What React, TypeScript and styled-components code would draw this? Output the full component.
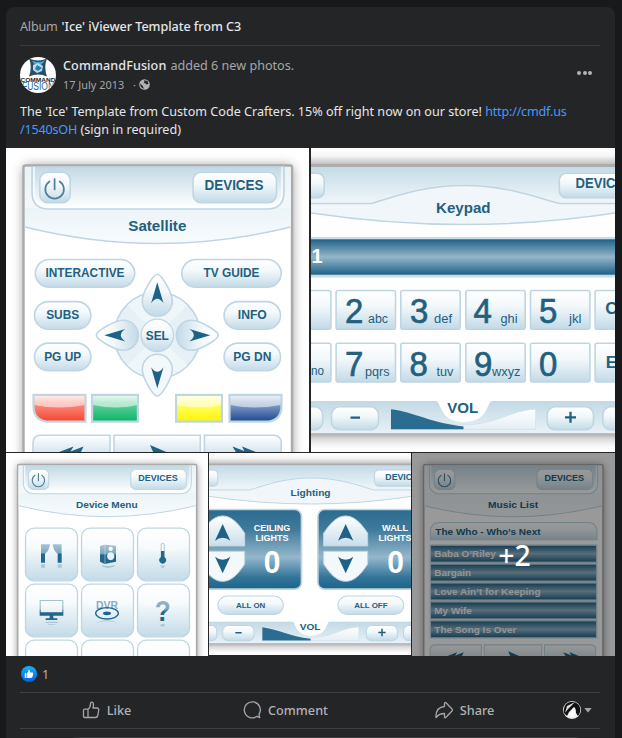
import React from "react";
import styled, { createGlobalStyle } from "styled-components";

const GlobalStyle = createGlobalStyle`
  *, *::before, *::after { box-sizing: border-box; }
  body {
    margin: 0;
    height: 738px;
    overflow: hidden;
    background: #18191a;
    color: #e4e6eb;
    font-family: "Noto Sans", "Open Sans", sans-serif;
    font-size: 12.6px;
  }
`;

const Page = styled.main`
  width: 622px;
  height: 738px;
  padding: 7px 7px 0 6px;
  overflow: hidden;
`;

const Card = styled.article`
  height: 760px;
  background: #242526;
  border-radius: 8px;
  overflow: hidden;
`;

const AlbumBar = styled.header`
  display: flex;
  gap: 4px;
  align-items: center;
  margin: 0 15px 0 14px;
  height: 39px;
  border-bottom: 1px solid #3a3b3c;
`;

const Muted = styled.span<{ $spacing?: number }>`
  color: #a4a7ab;
  letter-spacing: ${(p) => p.$spacing ?? 0}px;
`;

const Strong = styled.span<{ $spacing?: number }>`
  font-weight: 500;
  color: #e4e6eb;
  letter-spacing: ${(p) => p.$spacing ?? 0}px;
  white-space: nowrap;
`;

const PostHeader = styled.div`
  display: flex;
  align-items: center;
  height: 51px;
  margin-top: 3px;
  padding: 0 22px 0 14px;
`;

const Avatar = styled.svg`
  width: 36px;
  height: 36px;
  flex: none;
`;

const Byline = styled.div`
  flex: 1;
  margin-left: 7px;
  padding-top: 2px;
  display: flex;
  flex-direction: column;
`;

const AuthorLine = styled.div`
  display: flex;
  gap: 4px;
  line-height: 19px;
`;

const MetaLine = styled.div`
  display: flex;
  align-items: center;
  height: 20px;
  padding-bottom: 1px;
  font-size: 10.9px;
  color: #a4a7ab;
`;

const Dot = styled.span`
  margin: 0 3px 0 9px;
`;

const MoreButton = styled.button`
  display: flex;
  gap: 1.5px;
  padding: 0;
  border: 0;
  background: none;
  margin: 0 1px 4px 0;
  i {
    width: 4px;
    height: 4px;
    border-radius: 50%;
    background: #b0b3b8;
  }
`;

const Message = styled.p`
  margin: 0;
  height: 48px;
  padding: 3px 14px 0;
  line-height: 18px;
`;

const Link = styled.a`
  color: #4599ff;
  text-decoration: none;
  letter-spacing: -0.2px;
`;

const Gallery = styled.section`
  display: flex;
  flex-direction: column;
  gap: 1px;
`;

const PhotoRow = styled.div<{ $columns: string; $gap: number }>`
  display: grid;
  grid-template-columns: ${(p) => p.$columns};
  gap: ${(p) => p.$gap}px;
`;

const PhotoTile = styled.figure<{ $height: number }>`
  position: relative;
  margin: 0;
  height: ${(p) => p.$height}px;
  overflow: hidden;
  background: #fff;
  font-family: "Liberation Sans", Arial, sans-serif;
`;

const Artwork = styled.svg`
  display: block;
  width: 100%;
  height: 100%;
`;

const MoreOverlay = styled.div`
  position: absolute;
  inset: 0;
  display: flex;
  align-items: center;
  justify-content: center;
  padding-top: 1px;
  padding-left: 2px;
  background: rgba(0, 0, 0, 0.4);
  color: #fff;
  font: 500 28.5px "Noto Sans", sans-serif;
`;

const Reactions = styled.div`
  display: flex;
  align-items: center;
  gap: 5px;
  height: 37px;
  margin: 0 15px 0 14px;
  padding-left: 1px;
  border-bottom: 1px solid #3e4042;
  color: #b0b3b8;
`;

const Actions = styled.div`
  display: flex;
  align-items: center;
  height: 36px;
  margin: 0 15px 0 14px;
  padding-bottom: 1px;
  border-bottom: 1px solid #3e4042;
`;

const Action = styled.button`
  width: 179px;
  display: flex;
  align-items: center;
  justify-content: center;
  gap: 7px;
  padding: 0 6px 0 0;
  border: 0;
  background: none;
  color: #b0b3b8;
  font: 500 12.7px "Noto Sans", sans-serif;
`;

const Icon = styled.svg<{ $size: number }>`
  width: ${(p) => p.$size}px;
  height: ${(p) => p.$size}px;
  flex: none;
`;

const Identity = styled.div`
  display: flex;
  align-items: center;
  gap: 3px;
  margin-left: 6px;
`;

const CommentField = styled.div`
  height: 30px;
  margin: 8px 25px 0 57px;
  border-radius: 15px;
  background: #3a3b3c;
`;

const Defs = styled.svg`
  display: block;
  width: 0;
  height: 0;
`;

const INK = "#22607f";
const EDGE = "#bfd6e2";

type Stop = [number, string];
const gradients: Record<string, Stop[]> = {
  bar: [[0, "#c3d9e5"], [0.9, "#fafdfe"]],
  wide: [[0, "#c5dbe7"], [1, "#f1f7fa"]],
  hood: [[0, "#d9e8f0"], [0.4, "#e8f2f7"], [1, "#f7fbfd"]],
  key: [[0, "#ffffff"], [0.4, "#f3f8fb"], [1, "#c2dae7"]],
  disk: [[0, "#ffffff"], [1, "#c9deea"]],
  dark: [[0, "#1f6287"], [0.5, "#93b6ca"], [1, "#1f6287"]],
  panel: [[0, "#2b6b8f"], [0.25, "#3f7a9b"], [0.6, "#94b7cb"], [0.85, "#34759a"], [1, "#1d648a"]],
  foot: [[0, "#c2d9e5"], [1, "#e9f2f7"]],
  above: [[0, "#ffffff"], [0.45, "#f6f6f6"], [1, "#bcbcbc"]],
  below: [[0, "#aaaaaa"], [0.3, "#dcdcdc"], [0.7, "#fafafa"], [1, "#ffffff"]],
  red: [[0, "#ffd8d2"], [0.3, "#fb9083"], [1, "#f5442f"]],
  green: [[0, "#d4f5e4"], [0.3, "#67d1a0"], [1, "#08b566"]],
  yellow: [[0, "#ffffc8"], [0.3, "#ffff70"], [1, "#fff500"]],
  blue: [[0, "#dbe5f2"], [0.3, "#8ba4cb"], [1, "#1d478f"]],
  fade: [[0, "#a7c4d5"], [0.45, "#7fa9c0"], [0.55, "#22668b"], [1, "#22668b"]],
  shine: [[0, "#ffffff"], [1, "#e4eff5"]],
  like: [[0, "#18afff"], [1, "#0062df"]],
};

const Gradients = () => (
  <Defs aria-hidden="true">
    <defs>
      {Object.entries(gradients).map(([id, stops]) => (
        <linearGradient key={id} id={id} x1="0" y1="0" x2="0" y2="1">
          {stops.map(([offset, color]) => (
            <stop key={offset} offset={offset} stopColor={color} />
          ))}
        </linearGradient>
      ))}
      <filter id="soft" x="-20%" y="-20%" width="140%" height="140%">
        <feGaussianBlur stdDeviation="6" />
      </filter>
    </defs>
  </Defs>
);

interface LabelProps {
  x: number;
  y: number;
  w?: number;
  size?: number;
  color?: string;
  weight?: number;
  anchor?: "start" | "middle";
  children: string;
}

const Label = ({ x, y, w, size = 12.5, color = INK, weight = 700, anchor = "middle", children }: LabelProps) => (
  <text x={x} y={y} textLength={w} lengthAdjust="spacingAndGlyphs" fontSize={size} fill={color} fontWeight={weight} textAnchor={anchor}>
    {children}
  </text>
);

interface BoxProps {
  x: number;
  y: number;
  w: number;
  h: number;
  r: number;
  fill?: string;
  sw?: number;
}

const Box = ({ x, y, w, h, r, fill = "url(#key)", sw = 1.6 }: BoxProps) => (
  <rect x={x + 0.8} y={y + 0.8} width={w - 1.6} height={h - 1.6} rx={r} fill={fill} stroke={EDGE} strokeWidth={sw} />
);

const Pill = (p: { x: number; y: number; w: number; text: string; tw: number; size?: number }) => (
  <>
    <Box x={p.x} y={p.y} w={p.w} h={29.3} r={14} />
    <Label x={p.x + p.w / 2} y={p.y + 18.6} w={p.tw} size={p.size}>{p.text}</Label>
  </>
);

/* Frame, toolbar and title shared by the portrait remote screens. */
const PortraitShell = ({ title, width }: { title: string; width: number }) => (
  <>
    <rect x={18} y={18} width={268} height={310} rx={4} fill="#777" filter="url(#soft)" opacity={0.85} />
    <rect x={17.5} y={17.5} width={268.5} height={320} rx={2} fill="#fff" stroke="#aaa" strokeWidth={2.4} />
    <path d="M19 19H284.700V79Q151.500 112 19 79Z" fill="url(#hood)" />
    <path d="M19 79Q151.500 112 284.700 79" fill="none" stroke={EDGE} strokeWidth={1.5} />
    <path d="M19 19H26V44Q26 61 43 61H261Q278 61 278 44V19H284.700V60H19Z" fill="#f6fafc" opacity={0.6} />
    <path d="M26 19V44Q26 61 43 61H261Q278 61 278 44V19Z" fill="url(#bar)" stroke={EDGE} strokeWidth={1.6} />
    <path d="M28 19V44Q28 59 43 59H261Q276 59 276 44V19" fill="none" stroke="#fff" strokeWidth={1.6} opacity={0.8} />
    <Box x={33} y={23.500} w={32} h={32} r={8} />
    <path d="M43.500 33.500a9.300 9.300 0 1 0 10.200 0M48.600 31v10.500" fill="none" stroke="#4d7f9b" strokeWidth={1.7} strokeLinecap="round" />
    <Box x={186.300} y={23.500} w={85} h={32} r={8} />
    <Label x={228} y={42} w={59} size={13.800}>DEVICES</Label>
    <Label x={151.300} y={82.500} w={width} size={14.500}>{title}</Label>
  </>
);

const Transport = () => (
  <>
    <path d="M27 310V295Q27 287.300 35 287.300H104V310Z" fill="url(#disk)" stroke={EDGE} strokeWidth={1.600} />
    <path d="M108 310V287.300H194.300V310Z" fill="url(#disk)" stroke={EDGE} strokeWidth={1.600} />
    <path d="M198.400 310V287.300H267.500Q275.200 287.300 275.200 295V310Z" fill="url(#disk)" stroke={EDGE} strokeWidth={1.600} />
    <path d="M67.500 298.500L63 306H48ZM77.500 298.500L74 306H58Z" fill="#1f6287" />
    <path d="M144 297L165 306H148Z" fill="#1f6287" />
    <path d="M226.500 298.500L246 306H231ZM236 298.500L255 306H240Z" fill="#1f6287" />
  </>
);

const colorKeys: [string, string, number][] = [
  ["red", "M27.500 246.800H79.500V273.700H41Q27.500 272 27.500 258Z", 27.5],
  ["green", "M86.100 246.800H131.900V273.700H86.100Z", 86.1],
  ["yellow", "M170.100 246.800H215.900V273.700H170.100Z", 170.1],
  ["blue", "M223.500 246.800H275.500V258Q275.500 272 262 273.700H223.500Z", 223.5],
];

const SatelliteRemote = () => (
  <Artwork viewBox="0 0 303 304" role="img" aria-label="Satellite remote">
    <PortraitShell title="Satellite" width={58} />
    <Pill x={28.500} y={110.700} w={101} text="INTERACTIVE" tw={79} />
    <Pill x={175} y={110.700} w={101} text="TV GUIDE" tw={56} />
    <Pill x={27.700} y={152.800} w={58} text="SUBS" tw={33} />
    <Pill x={27.700} y={194.300} w={58} text="PG UP" tw={37} />
    <Pill x={217.300} y={152.800} w={58} text="INFO" tw={29} />
    <Pill x={217.300} y={194.300} w={58} text="PG DN" tw={38} />
    <g transform="translate(151.300 187.300)">
      <circle r={43} fill="#e6f0f6" stroke={EDGE} strokeWidth={1.600} />
      <path d="M-30 30L0 0L30 30A43 43 0 0 1 -30 30M-30 -30L0 0L30 -30A43 43 0 0 0 -30 -30" fill="#eff6fa" />
      {[0, 90, 180, 270].map((a) => (
        <g key={a} transform={`rotate(${a})`}>
          <path d="M0 -61C4 -61 15 -43 15 -34A15 15 0 0 1 -15 -34C-15 -43 -4 -61 0 -61Z" fill={a === 180 ? "#f3f8fb" : "url(#key)"} stroke={EDGE} strokeWidth={1.600} />
          <path d="M0 -53L6.200 -32Q0 -41 -6.200 -32Z" fill="#1f6287" />
        </g>
      ))}
      <circle r={16.200} fill="url(#key)" stroke={EDGE} strokeWidth={1.300} />
      <Label x={0} y={4.500} w={23}>SEL</Label>
    </g>
    {colorKeys.map(([name, d, x]) => (
      <g key={name}>
        <path d={d} fill={`url(#${name})`} stroke={EDGE} strokeWidth={2.200} />
        <path d={`M${x + 1} 248H${x + (x > 220 || x < 30 ? 51 : 45)}V257Q${x + 25} 262 ${x + 1} 257Z`} fill="#fff" opacity={0.55} />
      </g>
    ))}
    <Transport />
  </Artwork>
);

/* Toolbar, title hood and volume strip shared by the landscape screens. */
const LandscapeShell = ({ title, width }: { title: string; width: number }) => (
  <>
    <rect width={304} height={17} fill="url(#above)" />
    <rect y={16} width={304} height={3} fill="#adadad" />
    <rect y={19} width={304} height={37} fill="url(#wide)" />
    <path d="M0 55.500H60C70 54 105 37.500 153.700 37.500S237 54 248.700 55.500H304V65Q153.700 88 0 65Z" fill="#f0f6fa" />
    <path d="M0 55.500H60C70 54 105 37.500 153.700 37.500S237 54 248.700 55.500H304M0 65Q153.700 88 304 65" fill="none" stroke={EDGE} strokeWidth={1.500} />
    <Box x={-20} y={24.500} w={34} h={26} r={7} />
    <Box x={247.500} y={24.500} w={85} h={26} r={7} />
    <Label x={264.500} y={40.300} w={57.500} size={13.800} anchor="start">DEVICES</Label>
    <Label x={152.300} y={64.500} w={width} size={14.500}>{title}</Label>
    <rect y={253} width={304} height={33} fill="url(#foot)" />
    <rect y={285.300} width={304} height={19} fill="url(#below)" />
    <path d="M80 261C105 263 120 277 152 277S200 262 224.700 261V281.300H80Z" fill="url(#shine)" stroke="#d3e3ec" />
    <path d="M80 261.300C103 264 120 275 152.500 278.500V281.300H80Z" fill="#2b6d91" />
    <path d="M124 252.500C131 252.500 127 274 153 274S175 252.500 182 252.500Z" fill="#fff" />
    <Label x={151.700} y={265.300} w={31} size={14.500}>VOL</Label>
    <Box x={-20} y={258} w={32.500} h={24.500} r={8} />
    <Box x={19.700} y={258} w={48.600} h={24.500} r={8} />
    <Box x={235.300} y={258} w={48} h={24.500} r={8} />
    <Box x={291} y={258} w={48} h={24.500} r={8} />
    <path d="M39.500 269.600H49M254 269.300H265M259.500 263.800V274.800" stroke={INK} strokeWidth={2.300} />
  </>
);

const keys: [number, number, string, number, string, number, number][] = [
  [24.300, 141.700, "2", 34, "abc", 57, 20],
  [89, 141.700, "3", 99, "def", 123, 18],
  [154, 141.700, "4", 162.500, "ghi", 189.500, 17],
  [218.700, 141.700, "5", 228, "jkl", 258, 12.500],
  [24.300, 194.500, "7", 34, "pqrs", 54, 24.500],
  [89, 194.500, "8", 98.500, "tuv", 125.500, 17],
  [154, 194.500, "9", 163, "wxyz", 181, 28.500],
  [218.700, 194.500, "0", 228, "", 0, 0],
];

const KeypadRemote = () => (
  <Artwork viewBox="0 0 304 304" role="img" aria-label="Keypad remote">
    <LandscapeShell title="Keypad" width={54.500} />
    <rect y={89} width={304} height={40.500} fill="#c8dde8" />
    <rect y={91.300} width={304} height={35.400} fill="url(#dark)" />
    <Label x={0.500} y={115.300} size={20} color="#fff" anchor="start">1</Label>
    <Box x={-40} y={141.700} w={60.700} h={40.300} r={2} />
    <Box x={-40} y={194.500} w={60.700} h={40.300} r={2} />
    <Label x={0} y={226.500} w={13} size={12.500} weight={400} anchor="start">no</Label>
    <Box x={283.300} y={141.700} w={60.700} h={40.300} r={2} />
    <Box x={283.300} y={194.500} w={60.700} h={40.300} r={2} />
    <Label x={294.300} y={166} size={17} anchor="start">C</Label>
    <Label x={294.800} y={220} size={17} anchor="start">E</Label>
    {keys.map(([x, y, digit, dx, letters, lx, lw]) => (
      <g key={digit}>
        <Box x={x} y={y} w={61} h={40.300} r={2} />
        <text x={dx} y={y + 33.200} fontSize={35} fill={INK} stroke={INK} strokeWidth={0.700} textLength={18.300} lengthAdjust="spacingAndGlyphs">{digit}</text>
        {letters && <Label x={lx} y={y + 33} w={lw} size={12.500} weight={400} anchor="start">{letters}</Label>}
      </g>
    ))}
  </Artwork>
);

const tileRows = [112, 196, 280];
const tileColumns = [28.500, 112.500, 196.500];

const DeviceMenu = () => (
  <Artwork viewBox="0 0 303 304.500" role="img" aria-label="Device menu">
    <PortraitShell title="Device Menu" width={92.500} />
    {tileRows.map((y) =>
      tileColumns.map((x) => (
        <g key={`${x}-${y}`}>
          <Box x={x} y={y} w={79.500} h={80.500} r={13} sw={2} />
          <path d={`M${x + 2} ${y + 28}Q${x + 40} ${y + 42} ${x + 77.5} ${y + 28}V${y + 14}Q${x + 77} ${y + 2} ${x + 65} ${y + 2}H${x + 14}Q${x + 2} ${y + 2} ${x + 2} ${y + 14}Z`} fill="#fff" opacity={0.35} />
        </g>
      )),
    )}
    <g fill="url(#fade)">
      <path d="M52.500 137H66Q65 147 58.500 151V164.500H52.500ZM83.500 137H70Q71 147 77.500 151V164.500H83.500Z" />
      <path fillRule="evenodd" d="M141 139.500L148 137.500L165 139V163L148 166.500L141 163ZM157 140.500a3.200 3.200 0 1 0 .1 0ZM157 149a5.500 6 0 1 0 .1 0Z" />
      <path fillRule="evenodd" d="M50.500 220.500H86V244H71V248H77V250.500H59.500V248H65.500V244H50.500ZM52 222V239H84.500V222Z" />
    </g>
    <path d="M148.500 138V166" stroke="#d5e5ee" strokeWidth={0.800} />
    <rect x={232.800} y={135.500} width={4.400} height={22} rx={2} fill="#fff" stroke="#7da6bd" />
    <path d="M232.500 147H237.500V156A5.300 5.300 0 1 1 232.500 156Z" fill="#22668b" />
    <g opacity={0.25} fill="#22668b">
      <path d="M52.500 167H58.500V172H52.500ZM77.500 167H83.500V172H77.500ZM144 168Q153 171 163 168V170Q153 175 144 170ZM231 168Q235 170 239 168L236 173H234ZM59.500 253H77.500V255H59.500ZM63 257H74V258H63ZM232 257H238V260H232Z" />
      <path d="M134 256Q151.500 246 169 256Q151.500 249 134 256Z" />
    </g>
    <Label x={151.500} y={234} w={33} size={16.500} color="#86acc2">DVR</Label>
    <ellipse cx={151.500} cy={240.500} rx={17} ry={8.500} fill="none" stroke="#22668b" strokeWidth={2} />
    <ellipse cx={151.500} cy={240.500} rx={6} ry={2.800} fill="#22668b" />
    <text x={235} y={252} fontSize={44} fontWeight={700} fill="url(#fade)" textAnchor="middle" textLength={24} lengthAdjust="spacingAndGlyphs">?</text>
  </Artwork>
);

const Dimmer = ({ cx }: { cx: number }) => (
  <g transform={`translate(${cx} 143.500)`}>
    {[1, -1].map((dir) => (
      <g key={dir} transform={`scale(1 ${dir})`}>
        <path d="M-33 -4V-23C-22 -40 -12 -49 0 -49S22 -40 33 -23V-4Z" fill={dir === 1 ? "url(#disk)" : "#f3f8fb"} stroke={EDGE} strokeWidth={1.500} />
        <path d="M0 -37L11.500 -12Q0 -21 -11.500 -12Z" fill="#1f6287" />
      </g>
    ))}
  </g>
);

const LightingRemote = () => (
  <Artwork viewBox="0 0 303 303" role="img" aria-label="Lighting remote">
    <LandscapeShell title="Lighting" width={60} />
    <Box x={-40} y={84} w={179.500} h={121} r={10} fill="url(#panel)" sw={2.500} />
    <Box x={162.500} y={84} w={179.500} h={121} r={10} fill="url(#panel)" sw={2.500} />
    <Dimmer cx={20.500} />
    <Dimmer cx={205} />
    <Label x={94.500} y={116.500} w={55} size={13} color="#fff">CEILING</Label>
    <Label x={94.500} y={131.700} w={49.500} size={13} color="#fff">LIGHTS</Label>
    <Label x={94.700} y={180} w={25} size={48} color="#fff">0</Label>
    <Label x={279} y={116.500} w={39} size={13} color="#fff">WALL</Label>
    <Label x={279} y={131.700} w={49.500} size={13} color="#fff">LIGHTS</Label>
    <Label x={280} y={180} w={25} size={48} color="#fff">0</Label>
    <Pill x={12.500} y={213.800} w={100} text="ALL ON" tw={44} size={12} />
    <Pill x={192.500} y={213.800} w={100.500} text="ALL OFF" tw={50} size={12} />
  </Artwork>
);

const tracks: [string, number][] = [
  ["Baba O’Riley", 92],
  ["Bargain", 55],
  ["Love Ain’t for Keeping", 159],
  ["My Wife", 56],
  ["The Song Is Over", 123],
];

const MusicList = () => (
  <Artwork viewBox="0 0 304 304" role="img" aria-label="Music list">
    <PortraitShell title="Music List" width={75} />
    <path d="M27.500 130V118Q27.500 104 42 104H262.500Q277 104 277 118V130Z" fill="url(#key)" stroke={EDGE} strokeWidth={1.600} />
    <Label x={35} y={123.500} w={157.500} size={14.500} anchor="start">The Who - Who’s Next</Label>
    {tracks.map(([name, w], i) => (
      <g key={name}>
        <rect x={27.500} y={138 + i * 28.300} width={249} height={25.600} fill="url(#dark)" stroke={EDGE} strokeWidth={2} />
        <Label x={33.500} y={156 + i * 28.300} w={w} size={14} color="#f4f7f9" anchor="start">{name}</Label>
      </g>
    ))}
    <Transport />
  </Artwork>
);

const BrandAvatar = () => (
  <Avatar viewBox="0 0 36 36" role="img" aria-label="CommandFusion">
    <clipPath id="round"><circle cx={18} cy={18} r={18} /></clipPath>
    <g clipPath="url(#round)">
      <rect width={36} height={36} fill="#fff" />
      <path d="M9 1.500Q18 5.500 27 1.500Q23.500 10 27 19.500Q18 15.500 9 19.500Q12.500 10 9 1.500Z" fill="#2c4d62" />
      <path d="M12 3.500Q18 6.500 25 3.500L20 9Q15 10 12 3.500Z" fill="#48a9dc" />
      <path d="M13 8L18 6L23 9L22 14L17 16L13 13Z" fill="#b7dcf0" />
      <path d="M17 8L22 11L18 14L15 12Z" fill="#287cb1" />
      <text x={0.500} y={25.300} fontSize={5.500} fontFamily="Liberation Sans" fontWeight={700} textLength={35} lengthAdjust="spacingAndGlyphs" fill="#222">COMMAND</text>
      <text x={2} y={33} fontSize={10} fontFamily="Liberation Sans" textLength={32} lengthAdjust="spacingAndGlyphs" fill="#1d658f">FUSION</text>
    </g>
  </Avatar>
);

const Globe = () => (
  <Icon $size={11} viewBox="0 0 11 11">
    <circle cx={5.500} cy={5.500} r={5.300} fill="#b0b3b8" />
    <path d="M5 1.200L8.500 2L9.500 5L7.500 5.500L6 4L4.500 4.500L5.500 2.500ZM1 4.500L3.500 6.500L5 9.800L3 9Q1 7 1 4.500Z" fill="#242526" />
  </Icon>
);

const thumb =
  "M6 8.200H2.500Q1.500 8.200 1.500 9.200V15.500Q1.500 16.500 2.500 16.500H6M6 8.200V16.500M6 8.200Q8.600 6.500 8.500 2.800Q8.500 1.200 9.700 1.200Q11.500 1.300 11.500 4Q11.500 5.600 10.900 7H15Q17 7.100 16.700 9L15.800 14.500Q15.400 16.500 13.500 16.500H6";

const LikeBadge = () => (
  <Icon $size={16} viewBox="0 0 16 16">
    <circle cx={8} cy={8} r={8} fill="url(#like)" />
    <path d="M3.800 7.200H5.400V12H3.800ZM6 7.200Q7.500 6 7.500 3.800Q9.300 3.500 9 6.500H11.500Q12.600 6.800 12 8.200Q12.300 9 11.700 9.800Q11.800 11 11 11.300Q10.800 12 10 12H7Q6.300 12 6 11.500Z" fill="#fff" />
  </Icon>
);

const stroke = { fill: "none", stroke: "#a3a6aa", strokeWidth: 1.3, strokeLinejoin: "round" as const };

export default function App() {
  return (
    <Page>
      <GlobalStyle />
      <Gradients />
      <Card>
        <AlbumBar>
          <Muted $spacing={-0.2}>Album</Muted>
          <Strong $spacing={-0.06}>'Ice' iViewer Template from C3</Strong>
        </AlbumBar>
        <PostHeader>
          <BrandAvatar />
          <Byline>
            <AuthorLine>
              <Strong $spacing={0.1}>CommandFusion</Strong>
              <Muted>added 6 new photos.</Muted>
            </AuthorLine>
            <MetaLine>
              17 July 2013<Dot>·</Dot>
              <Globe />
            </MetaLine>
          </Byline>
          <MoreButton aria-label="More"><i /><i /><i /></MoreButton>
        </PostHeader>
        <Message>
          The 'Ice' Template from Custom Code Crafters. 15% off right now on our store! <Link>http://cmdf.us<br />/1540sOH</Link> (sign in required)
        </Message>
        <Gallery>
          <PhotoRow $columns="303px 304px" $gap={2}>
            <PhotoTile $height={304}><SatelliteRemote /></PhotoTile>
            <PhotoTile $height={304}><KeypadRemote /></PhotoTile>
          </PhotoRow>
          <PhotoRow $columns="202px 202px 203px" $gap={1}>
            <PhotoTile $height={203}><DeviceMenu /></PhotoTile>
            <PhotoTile $height={202}><LightingRemote /></PhotoTile>
            <PhotoTile $height={203}>
              <MusicList />
              <MoreOverlay>+2</MoreOverlay>
            </PhotoTile>
          </PhotoRow>
        </Gallery>
        <Reactions>
          <LikeBadge />
          1
        </Reactions>
        <Actions>
          <Action>
            <Icon $size={18} viewBox="0 0 18 18"><path d={thumb} {...stroke} /></Icon>
            Like
          </Action>
          <Action>
            <Icon $size={18} viewBox="0 0 18 18">
              <path d="M14 15.300A8 8 0 1 1 16 13.200L16.700 16.700Z" {...stroke} />
            </Icon>
            Comment
          </Action>
          <Action>
            <Icon $size={18} viewBox="0 0 18 18">
              <path d="M10 1.500Q9.500 1.700 9.500 2.500V5.500Q1 6 .8 16Q.9 17 1.500 16.200Q4 12.500 9.500 12.500V15.500Q9.500 17.500 11 16.300L17 10Q17.700 9 17 8L11 1.800Q10.500 1.300 10 1.500Z" {...stroke} />
            </Icon>
            Share
          </Action>
          <Identity>
            <Icon $size={18} viewBox="0 0 18 18">
              <circle cx={9} cy={9} r={9} fill="#eee" />
              <path d="M3 3Q10 -2 16 4Q19 10 15 15L13 12Q13 7 11 6L6 11L4 15L1 12Q0 7 3 3Z" fill="#111" />
              <path d="M4 5L12 1L5 8L2 12Z" fill="#ddd" />
              <path d="M6 14Q8 11 10 7Q14 13 10 16Z" fill="#fff" />
            </Icon>
            <Icon $size={8} viewBox="0 0 8 8"><path d="M.3 2H7.700L4 6.500Z" fill="#a3a6aa" /></Icon>
          </Identity>
        </Actions>
        <CommentField />
      </Card>
    </Page>
  );
}
